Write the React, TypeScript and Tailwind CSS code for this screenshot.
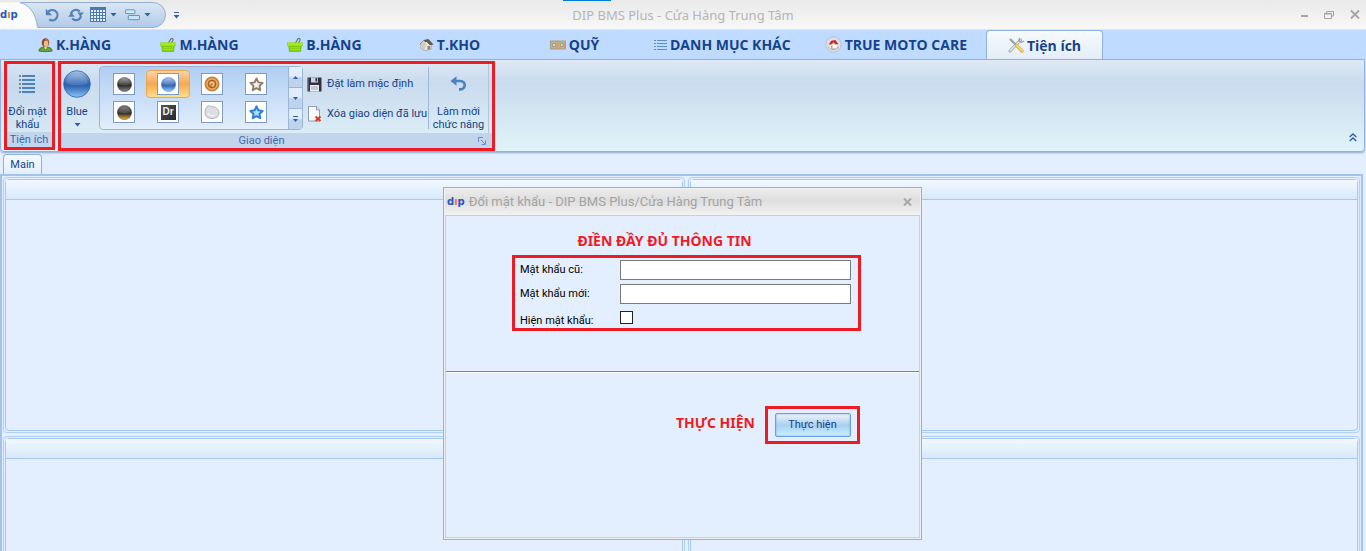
import React from "react";

const RED = "border-[3px] border-[#ed1c24]";

function DipLogo() {
  return (
    <span className="font-['DejaVu_Sans',sans-serif] text-[10px] leading-none font-bold">
      <span className="text-[#2456c8]">d</span>
      <span className="text-[#f07818]">ı</span>
      <span className="text-[#2456c8]">p</span>
    </span>
  );
}

function Caret() {
  return (
    <svg width="7" height="4" viewBox="0 0 7 4" fill="#2f5fa5" aria-hidden="true">
      <path d="M0.5 0h6L3.5 3.5z" />
    </svg>
  );
}

function PersonIcon() {
  return (
    <svg width="15" height="16" viewBox="0 0 16 16" aria-hidden="true">
      <path d="M1 14.500c0-3 2.500-4 5-4.300h4c2.500.300 5 1.300 5 4.300-4 .8-10 .8-14 0z" fill="#6ca03c" stroke="#41702a" strokeWidth=".9" />
      <path d="M6 9.500l2 3L10 9.500z" fill="#f3efe4" />
      <ellipse cx="8" cy="5.600" rx="4" ry="4.900" fill="#8a4a26" />
      <ellipse cx="8.600" cy="6.600" rx="2.500" ry="3.400" fill="#f0b98a" />
      <path d="M7.500 2.500c1.500-.8 3 .2 3.300 1.500" stroke="#c98a5c" fill="none" />
    </svg>
  );
}

function BasketIcon() {
  return (
    <svg width="16" height="16" viewBox="0 0 17 16" aria-hidden="true">
      <path d="M8.500 7l3-5.500c1.500-1.200 3 .200 2.200 1.800L11.500 7" fill="none" stroke="#6a7076" strokeWidth="1.200" />
      <path d="M1.500 7h14l-1 8h-12z" fill="#7ccb08" stroke="#69b400" strokeWidth=".6" />
      <path d="M.5 5.500h16v3.500h-16z" fill="#a8ec20" stroke="#86d010" strokeWidth=".6" />
      <path d="M3 11h11M3 13h11" stroke="#a4ec2a" strokeWidth="1" />
    </svg>
  );
}

function HouseIcon() {
  return (
    <svg width="15" height="15" viewBox="0 0 16 16" aria-hidden="true">
      <path d="M2 7l5-3 6 4v5l-7 1.500L2 12z" fill="#f0ece4" stroke="#9b958b" strokeWidth=".7" />
      <path d="M.5 8L5 3.200 10 2l5.500 6-4 .8L8 5z" fill="#65584e" />
      <path d="M5 3.500L8.500 8 6 13.500 2 12V7z" fill="#d5cec3" />
      <path d="M9 9.500h3V13l-3 .600z" fill="#8f8578" />
    </svg>
  );
}

function MoneyIcon() {
  return (
    <svg width="16" height="12" viewBox="0 0 16 12" aria-hidden="true">
      <rect x=".5" y="2" width="15" height="8" fill="#b4b594" stroke="#99977a" strokeWidth=".8" />
      <path d="M2.500 4.500h3v3h-3zM10.500 4.500H13v3h-2.500z" fill="#d9d8bc" stroke="#8e8b6c" strokeWidth=".6" />
      <path d="M6.600 1.500h1.800v9H6.600zM14 2h1.300v8H14z" fill="#e4986a" />
    </svg>
  );
}

function ListIcon() {
  return (
    <svg width="13" height="12" viewBox="0 0 13 12" shapeRendering="crispEdges" aria-hidden="true">
      <path d="M0 1.500h2M0 4.500h2M0 7.500h2M0 10.500h2" stroke="#7c8792" />
      <path d="M3 1.500h10M3 4.500h10M3 7.500h10M3 10.500h10" stroke="#5a8fca" />
    </svg>
  );
}

function CareIcon() {
  return (
    <svg width="17" height="17" viewBox="0 0 17 17" aria-hidden="true">
      <circle cx="8.500" cy="8.500" r="7.700" fill="#d7dfea" stroke="#b3bfce" strokeWidth=".9" />
      <path d="M3 11h11a6.500 6.500 0 0 1-11 0z" fill="#9da7b5" />
      <path d="M4.500 8h7.500v4.500H4.500z" fill="#fbfaf4" stroke="#d9c7b0" strokeWidth=".5" />
      <path d="M3.800 8.300L6.300 4.800l4-.8 3 4-2.800.4L8.500 6.200 6.500 8.500z" fill="#cf2a22" />
      <path d="M6 9.500h1.500v3H6z" fill="#d09a70" />
    </svg>
  );
}

function ToolsIcon() {
  return (
    <svg width="17" height="16" viewBox="0 0 17 16" aria-hidden="true">
      <path d="M2 14L12.500 3" stroke="#9da3a8" strokeWidth="3" strokeLinecap="round" />
      <path d="M2.200 13.800L12.500 3" stroke="#e6e9eb" strokeWidth="1.400" strokeLinecap="round" />
      <path d="M11.500 1l-.5 2.800 2.500 1.500L16 4" fill="none" stroke="#9da3a8" strokeWidth="1.400" />
      <path d="M2 2l5.500 5.500" stroke="#9da3a8" strokeWidth="2.400" />
      <path d="M8.500 8.500l5.500 5.500" stroke="#d9b43c" strokeWidth="3.200" strokeLinecap="round" />
      <path d="M8.500 8.300l5.500 5.500" stroke="#fbe26a" strokeWidth="1.500" strokeLinecap="round" />
    </svg>
  );
}

const tabs = [
  { label: "K.HÀNG", icon: <PersonIcon /> },
  { label: "M.HÀNG", icon: <BasketIcon /> },
  { label: "B.HÀNG", icon: <BasketIcon /> },
  { label: "T.KHO", icon: <HouseIcon /> },
  { label: "QUỸ", icon: <MoneyIcon /> },
  { label: "DANH MỤC KHÁC", icon: <ListIcon /> },
  { label: "TRUE MOTO CARE", icon: <CareIcon /> },
];

function TitleBar() {
  return (
    <header className="grid h-[30px] shrink-0 grid-cols-[1fr_auto_1fr] items-center border-b border-[#e2e6ea] bg-linear-to-b from-[#e9e9e9] to-[#f8f8f8]">
      <div className="relative flex h-full items-center">
        <svg className="absolute top-0 left-0" width="170" height="30" viewBox="0 0 170 30" aria-hidden="true">
          <defs>
            <linearGradient id="qat" x1="0" y1="0" x2="0" y2="1">
              <stop offset="0" stopColor="#dbe7f5" />
              <stop offset="1" stopColor="#b1cae8" />
            </linearGradient>
          </defs>
          <path d="M0 2.500h18c10 0 18 11 19.500 25H0z" fill="#fbfcfd" />
          <path d="M20 2.500h133a12.500 12.500 0 0 1 0 25H37.500C36 14 30 5 20 2.500z" fill="url(#qat)" stroke="#94b0d3" />
        </svg>
        <div className="relative flex h-full items-center">
          <div className="flex w-[45px]"><DipLogo /></div>
          <button aria-label="Hoàn tác" className="mr-2">
            <svg width="15" height="14" viewBox="0 0 15 14" fill="none" aria-hidden="true">
              <path d="M3 4.200A5.200 5.200 0 1 1 4.300 11.500" stroke="#5482b6" strokeWidth="2.200" />
              <path d="M.8.800v6.400h6.400z" fill="#5482b6" />
            </svg>
          </button>
          <button aria-label="Làm mới" className="mr-[6px]">
            <svg width="16" height="14" viewBox="0 0 16 14" fill="none" aria-hidden="true">
              <path d="M3 6a5 5 0 0 1 8.800-2.300M13 8a5 5 0 0 1-8.800 2.300" stroke="#5482b6" strokeWidth="2.100" />
              <path d="M9.200 4.600h6.600L12.500 8.800z" fill="#5482b6" />
              <path d="M.2 8.800h6.600L3.500 4.600z" fill="#5482b6" />
            </svg>
          </button>
          <button aria-label="Bảng" className="flex items-center gap-1">
            <svg width="16" height="15" viewBox="0 0 16 15" shapeRendering="crispEdges" aria-hidden="true">
              <path d="M0 0h16v15H0z" fill="#4a7ab2" />
              <path d="M1 3h2v2H1zM4 3h2v2H4zM7 3h2v2H7zM10 3h2v2h-2zM13 3h2v2h-2zM1 6h2v2H1zM4 6h2v2H4zM7 6h2v2H7zM10 6h2v2h-2zM13 6h2v2h-2zM1 9h2v2H1zM4 9h2v2H4zM7 9h2v2H7zM10 9h2v2h-2zM13 9h2v2h-2zM1 12h2v2H1zM4 12h2v2H4zM7 12h2v2H7zM10 12h2v2h-2zM13 12h2v2h-2z" fill="#e6f0fa" />
            </svg>
            <Caret />
          </button>
          <button aria-label="Cửa sổ" className="ml-2 flex items-center gap-1">
            <svg width="15" height="12" viewBox="0 0 16 12" aria-hidden="true">
              <rect x=".5" y=".5" width="10" height="4" rx=".5" fill="#d4eaf6" stroke="#5f8fbd" />
              <rect x="3.500" y="6.500" width="12" height="4.500" rx=".5" fill="#c6e6f6" stroke="#5f8fbd" />
            </svg>
            <Caret />
          </button>
          <button aria-label="Tùy chỉnh thanh công cụ" className="mt-px ml-[22px]">
            <svg width="7" height="7" viewBox="0 0 7 7" fill="#2f5fa5" aria-hidden="true">
              <path d="M1 0h5v1H1zM.5 3h6L3.500 6.500z" />
            </svg>
          </button>
        </div>
      </div>
      <div className="relative flex h-full items-center">
        <span className="absolute top-0 right-[183px] h-px w-12 bg-[#0078d7]" />
        <h1 className="pt-[2px] font-['Noto_Sans',sans-serif] text-[13px] text-[#b5b5b5]">DIP BMS Plus - Cửa Hàng Trung Tâm</h1>
      </div>
      <div className="flex items-center justify-end gap-4 pr-[6px] text-[#a4a4a4]">
        <button aria-label="Thu nhỏ">
          <svg width="8" height="10" viewBox="0 0 8 10" aria-hidden="true"><path d="M1 5h7v2H1z" fill="currentColor" /></svg>
        </button>
        <button aria-label="Khôi phục">
          <svg width="10" height="8" viewBox="0 0 10 8" fill="none" stroke="currentColor" aria-hidden="true"><path d="M2.500 2V.5h7V5H8M.5 2.500h7v5h-7zM.5 3h7" /></svg>
        </button>
        <button aria-label="Đóng">
          <svg width="10" height="9" viewBox="0 0 10 9" fill="none" stroke="currentColor" strokeWidth="1.900" aria-hidden="true"><path d="M1 .5l8 8M9 .5l-8 8" /></svg>
        </button>
      </div>
    </header>
  );
}

function RibbonTabs() {
  return (
    <nav className="flex h-[29px] shrink-0 bg-[#bfdbff] pl-3 font-['Open_Sans',sans-serif] text-[14px] font-bold text-[#15428b]">
      {tabs.map((t) => (
        <button key={t.label} className="flex min-w-[125px] items-center justify-center gap-[3px] px-[17px] whitespace-nowrap">
          {t.icon}
          {t.label}
        </button>
      ))}
      <button className="ml-[2px] flex w-[117px] items-center justify-center gap-[2px] rounded-t border border-b-0 border-[#8db2e3] bg-linear-to-b from-[#f6fafe] to-[#e5edf7] whitespace-nowrap">
        <ToolsIcon />
        Tiện ích
      </button>
    </nav>
  );
}

function Ball({ id, top, mid, bottom, size }: { id: string; top: string; mid: string; bottom: string; size: number }) {
  return (
    <svg width={size} height={size} viewBox="0 0 28 28" aria-hidden="true">
      <defs>
        <linearGradient id={id} x1="0" y1="0" x2="0" y2="1">
          <stop offset="0" stopColor={top} />
          <stop offset=".48" stopColor={mid} />
          <stop offset=".58" stopColor={mid} />
          <stop offset="1" stopColor={bottom} />
        </linearGradient>
      </defs>
      <circle cx="14" cy="14" r="13.300" fill={`url(#${id})`} stroke={mid} strokeWidth=".8" />
      <path d="M3 13a11.200 11.200 0 0 1 22 0c-7 3-15 3-22 0z" fill="#fff" opacity=".14" />
    </svg>
  );
}

const star = "M8 1.500l2 4.200 4.500.6-3.300 3.200.8 4.600L8 11.900l-4 2.200.8-4.600L1.500 6.300 6 5.700z";

const skins = [
  { name: "Đen", art: <Ball id="b1" size={15} top="#9c9c9c" mid="#303030" bottom="#8a8a8a" /> },
  { name: "Xanh", art: <Ball id="b2" size={15} top="#a9caf2" mid="#3468b6" bottom="#9cd0fa" />, on: true },
  {
    name: "Gỗ",
    art: (
      <svg width="16" height="16" viewBox="0 0 16 16" fill="none" aria-hidden="true">
        <circle cx="8" cy="8" r="7" fill="#d38838" stroke="#b87430" />
        <circle cx="8" cy="8" r="5.200" stroke="#edb878" strokeWidth="1" />
        <circle cx="8" cy="8" r="3.600" stroke="#9b5a1e" strokeWidth="1" />
        <path d="M6 8.500a2 2 0 1 1 2 1.700" stroke="#f3d09c" strokeWidth="1.200" />
      </svg>
    ),
  },
  {
    name: "Sao xám",
    art: (
      <svg width="15" height="15" viewBox="0 0 16 16" aria-hidden="true"><path d={star} fill="#f4efe6" stroke="#8a7c6a" strokeWidth="2" strokeLinejoin="round" /></svg>
    ),
  },
  { name: "Vàng đen", art: <Ball id="b3" size={15} top="#777777" mid="#36322a" bottom="#f0b830" /> },
  {
    name: "Tối",
    art: (
      <span className="flex size-[15px] items-center justify-center bg-linear-to-br from-[#555555] to-[#262626] font-['Liberation_Sans',sans-serif] text-[10px] leading-none font-bold text-[#ececec]">Dr</span>
    ),
  },
  {
    name: "Bạc",
    art: (
      <svg width="16" height="16" viewBox="0 0 16 16" aria-hidden="true">
        <path d="M3.500 2c1.500-.8 2.500.500 4.500.800 2-.3 3.500.200 5 1.700C14.500 6 15 7 15 9c0 3.500-3 5.500-7 5.500s-7-2-7-6C1 6 2 3.500 3.500 2z" fill="#dcdde6" stroke="#a9abb8" strokeWidth=".9" />
        <path d="M4 9c1 2.500 3 3.500 6 2.500" stroke="#fff" fill="none" />
      </svg>
    ),
  },
  {
    name: "Sao xanh",
    art: (
      <svg width="15" height="15" viewBox="0 0 16 16" aria-hidden="true"><path d={star} fill="#a9dcfb" stroke="#2f80d6" strokeWidth="2.200" strokeLinejoin="round" /></svg>
    ),
  },
];

function SpinButton({ label, children }: { label: string; children: React.ReactNode }) {
  return (
    <button aria-label={label} className="flex flex-1 items-center justify-center border-b border-[#9ab6d8] bg-linear-to-b from-[#e1edfa] from-45% to-[#bed3ec] to-55% last:border-b-0">
      {children}
    </button>
  );
}

function Ribbon() {
  return (
    <section className="mr-px flex h-[93px] shrink-0 items-start gap-[3px] rounded-b border border-[#8db2e3] bg-linear-to-b from-[#dfe9f5] via-[#c9dbee] via-25% to-[#e1f3f8] pt-px pl-[3px] text-[#15428b] shadow-[0_1px_2px_#8aa8cc]">
      <div className={"flex h-[89px] w-[51px] flex-col items-stretch bg-linear-to-b from-[#d5e3f3] via-[#c6d9ee] via-25% to-[#dbebf4] " + RED}>
        <button className="flex flex-1 flex-col items-center pt-[11px] leading-[13px]">
          <svg className="mr-[5px]" width="16" height="18" viewBox="0 0 16 18" shapeRendering="crispEdges" aria-hidden="true">
            <path d="M0 1h2M0 5h2M0 9h2M0 13h2M0 17h2" stroke="#8b8580" strokeWidth="2" />
            <path d="M3 1h13M3 5h13M3 9h13M3 13h13M3 17h13" stroke="#4a83bd" strokeWidth="2" />
          </svg>
          <span className="mt-[12px] pr-1">Đổi mật<br />khẩu</span>
        </button>
        <div className="h-[15px] bg-[#c1d6ec] pr-px text-center leading-4 text-[#3e6aaa]">Tiện ích</div>
      </div>

      <div className={"flex h-[90px] flex-col " + RED}>
        <div className="flex flex-1 items-stretch">
          <button className="flex w-8 flex-col items-center pt-[6px]">
            <Ball id="big" size={28} top="#a7c6ec" mid="#2f64b2" bottom="#8cc6f6" />
            <span className="mt-[6px] leading-[15px]">Blue</span>
            <span className="mt-1"><Caret /></span>
          </button>
          <div className="mt-[2px] ml-[6px] flex h-16 w-[204px] rounded-sm border border-[#9ab6d8] bg-linear-to-b from-[#b0cef2] to-[#e2eefb]">
            <div className="grid flex-1 grid-cols-4 content-start pt-[3px] pr-[10px] pl-[2px]">
              {skins.map((s) => (
                <button
                  key={s.name}
                  aria-label={s.name}
                  className={
                    s.on
                      ? "flex h-7 items-center justify-center rounded-sm border border-[#e8a858] bg-linear-to-b from-[#fbd3a6] via-[#f5a84e] to-[#fde08a]"
                      : "flex h-7 items-center justify-center"
                  }
                >
                  <span className="flex size-[22px] items-center justify-center border border-[#7c9cc4] bg-white">{s.art}</span>
                </button>
              ))}
            </div>
            <div className="flex w-[14px] flex-col border-l border-[#9ab6d8]">
              <SpinButton label="Lên"><svg width="5" height="3" viewBox="0 0 5 3" fill="#2f5fa5" aria-hidden="true"><path d="M0 3h5L2.500 0z" /></svg></SpinButton>
              <SpinButton label="Xuống"><svg width="5" height="3" viewBox="0 0 5 3" fill="#2f5fa5" aria-hidden="true"><path d="M0 0h5L2.500 3z" /></svg></SpinButton>
              <SpinButton label="Mở rộng"><svg width="5" height="6" viewBox="0 0 5 6" fill="#2f5fa5" aria-hidden="true"><path d="M0 0h5v1H0zM0 3h5L2.500 6z" /></svg></SpinButton>
            </div>
          </div>
          <div className="flex w-[125px] flex-col gap-3 pt-[11px] pl-1 leading-[18px] whitespace-nowrap">
            <button className="flex h-[18px] items-center gap-[5px]">
              <svg className="shrink-0" width="15" height="15" viewBox="0 0 15 15" aria-hidden="true">
                <path d="M.5.500h14v14h-14z" fill="#32323e" />
                <path d="M4 .5h7v5H4z" fill="#c9d2e2" />
                <path d="M8.500 1h1.700v3.500H8.500z" fill="#32323e" />
                <path d="M3 8h9v6.500H3z" fill="#e9eef5" />
                <path d="M4 10h7M4 12h7" stroke="#9aa4b4" />
                <path d="M1 1v13" stroke="#7276a8" />
              </svg>
              Đặt làm mặc định
            </button>
            <button className="flex h-[18px] items-center gap-[5px]">
              <svg className="shrink-0" width="15" height="16" viewBox="0 0 15 16" aria-hidden="true">
                <path d="M1.500.500h8l3 3.500v11h-11z" fill="#fbfcfe" stroke="#8d9bb4" />
                <path d="M9.500.500V4h3" fill="#dfe6f0" stroke="#8d9bb4" />
                <path d="M8.500 10.500l5 4.500M13.500 10.500l-5 4.500" stroke="#d83a20" strokeWidth="2" />
              </svg>
              Xóa giao diện đã lưu
            </button>
          </div>
          <div className="mt-[3px] h-[62px] w-px bg-[#9db8d8]" />
          <button className="mr-[3px] flex w-[60px] flex-col items-center border-r border-[#adc6e2] pt-[12px] leading-[13px] whitespace-nowrap">
            <svg width="17" height="15" viewBox="0 0 17 15" fill="none" aria-hidden="true">
              <path d="M3 5h7.500a4.200 4.200 0 0 1 0 8.400H9" stroke="#4a80be" strokeWidth="2.600" />
              <path d="M.5 5L6.500.300v9.400z" fill="#4a80be" />
            </svg>
            <span className="mt-[14px]">Làm mới<br />chức năng</span>
          </button>
        </div>
        <div className="flex h-[15px] items-center bg-[#c1d6ec] text-[#3e6aaa]">
          <span className="flex-1 pr-4 text-center leading-[14px]">Giao diện</span>
          <button aria-label="Tùy chọn giao diện" className="mr-[6px]">
            <svg width="8" height="8" viewBox="0 0 8 8" fill="none" stroke="#6c8fbe" aria-hidden="true"><path d="M.5 5V.5H5M3 3l4 4M7.500 3.500v4h-4" /></svg>
          </button>
        </div>
      </div>

      <button aria-label="Thu gọn" className="mr-[7px] mb-[9px] ml-auto self-end">
        <svg width="8" height="9" viewBox="0 0 8 9" fill="none" stroke="#2f62ad" strokeWidth="1.400" aria-hidden="true"><path d="M.7 4L4 1l3.300 3M.7 8L4 5l3.300 3" /></svg>
      </button>
    </section>
  );
}

function Panel() {
  return (
    <div className="rounded-sm border border-[#b3cff3] p-px">
      <div className="h-full rounded-sm border border-[#a9c8f0]">
        <div className="h-5 border-b border-[#a9c8f0] bg-linear-to-b from-[#f1f8fe] to-[#d8e9fb]" />
      </div>
    </div>
  );
}

function Dialog() {
  const field = "h-5 w-full border border-[#7a7a7a] bg-white px-1 outline-none";
  return (
    <div role="dialog" aria-labelledby="dlg-title" className="absolute top-[187px] right-px left-0 mx-auto flex h-[353px] w-[479px] flex-col border border-[#adadad] bg-[#f0f0f0] p-px">
      <div className="flex h-[26px] shrink-0 items-center gap-1 bg-linear-to-b from-[#ececec] via-[#dedede] via-45% to-[#f2f2f2] pr-2 pl-[2px]">
        <DipLogo />
        <h2 id="dlg-title" className="flex-1 text-[13px] text-[#a3a3a3]">Đổi mật khẩu - DIP BMS Plus/Cửa Hàng Trung Tâm</h2>
        <button aria-label="Đóng hộp thoại" className="text-[#a8a8a8]">
          <svg width="9" height="8" viewBox="0 0 9 8" fill="none" stroke="currentColor" strokeWidth="2" aria-hidden="true"><path d="M1 .5l7 7M8 .5l-7 7" /></svg>
        </button>
      </div>
      <form className="flex flex-1 flex-col border border-[#cfcfcf] bg-[#e3efff]" onSubmit={(e) => e.preventDefault()}>
        <div className="flex h-[156px] flex-col border-b border-[#4a90e2] pt-[15px]">
          <p className="pr-9 text-center font-['Noto_Sans',sans-serif] text-[14px] leading-5 font-bold text-[#ed1c24]">ĐIỀN ĐẦY ĐỦ THÔNG TIN</p>
          <div className={"mt-1 ml-[66px] grid h-[76px] w-[349px] grid-cols-[100px_1fr] content-start gap-y-1 pt-[2px] pr-[7px] pl-[5px] text-black " + RED}>
            <label htmlFor="old" className="leading-5">Mật khẩu cũ:</label>
            <input id="old" type="password" className={field} />
            <label htmlFor="new" className="leading-5">Mật khẩu mới:</label>
            <input id="new" type="password" className={field} />
            <label htmlFor="show" className="pt-[3px] leading-5">Hiện mật khẩu:</label>
            <input id="show" type="checkbox" className="mt-[3px] size-[13px] appearance-none border border-[#222222] bg-white" />
          </div>
        </div>
        <div className="flex items-center justify-end gap-[10px] border-t border-white pt-[33px] pr-[59px]">
          <span className="pb-1 font-['Noto_Sans',sans-serif] text-[14px] leading-5 font-bold text-[#ed1c24]">THỰC HIỆN</span>
          <span className={"flex h-[38px] w-[95px] items-center justify-center " + RED}>
            <button className="h-6 w-[76px] rounded-xs border border-[#6e9fdc] bg-linear-to-b from-[#f0f4f8] via-[#a9cff2] via-52% to-[#c9f2fd] pt-px text-[#15428b] shadow-[inset_0_0_2px_#6e9fdc]">Thực hiện</button>
          </span>
        </div>
      </form>
    </div>
  );
}

export default function App() {
  return (
    <div className="relative flex h-screen flex-col overflow-hidden bg-[#e3efff] font-['Roboto',sans-serif] text-[11px]">
      <TitleBar />
      <RibbonTabs />
      <Ribbon />
      <div className="flex h-[22px] shrink-0 items-end pt-[3px] pl-[3px]">
        <button className="h-5 w-[39px] rounded-t border border-b-0 border-[#8db2e3] bg-linear-to-b from-[#f5f9ff] to-[#e3efff] pt-[2px] text-[#15428b]">Main</button>
      </div>
      <main className="mr-[3px] grid shrink-0 grid-cols-[682fr_672fr] grid-rows-[256px_256px] gap-[3px] border-t-2 border-r-2 border-l-2 border-[#a3c3ee] p-px">
        <Panel />
        <Panel />
        <Panel />
        <Panel />
      </main>
      <Dialog />
    </div>
  );
}
